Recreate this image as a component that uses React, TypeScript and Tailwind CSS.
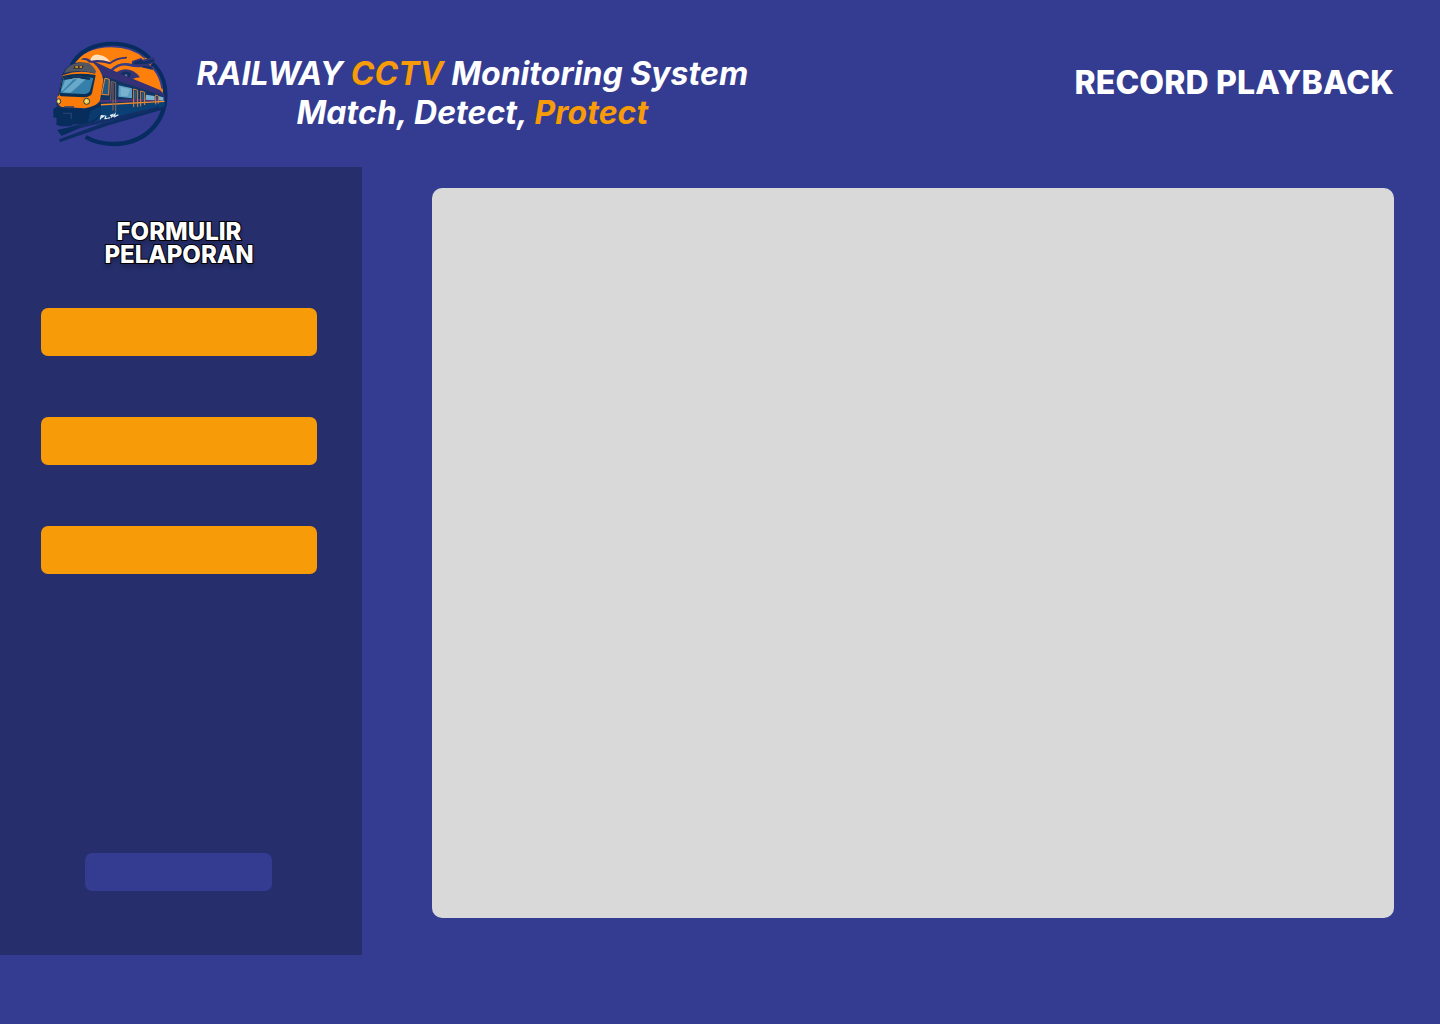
function TrainLogo() {
  return (
    <svg viewBox="0 0 384 348" className="h-[116px] w-[128px] shrink-0" role="img" aria-label="Railway CCTV logo">
      {/* sun */}
      <path d="M74 92 C98 54 142 30 196 28 C258 28 312 58 340 112 Q352 138 352 172 L200 120 L110 84 Z" fill="#fd7f0c" />
      <path d="M72 92 C100 50 144 31 196 31 C244 31 276 46 298 66" fill="none" stroke="#343d91" strokeWidth="6" />
      {/* ring */}
      <path d="M76 88 C100 46 144 23 200 23 C246 23 284 39 311 67" fill="none" stroke="#062c60" strokeWidth="12" />
      <path d="M318 82 C344 106 358 140 358 178 C358 260 294 324 204 324 C172 324 144 318 119 303" fill="none" stroke="#062c60" strokeWidth="13" />
      <path d="M323 98 Q344 123 349 158" fill="none" stroke="#343d91" strokeWidth="6" />
      {/* clouds and birds */}
      <path d="M132 76 Q136 54 157 56 Q178 58 193 77 Q160 70 132 76Z" fill="#ffdfbd" />
      <path d="M104 70 Q120 60 136 74 Q164 69 192 79 Q210 63 243 62 Q244 68 236 68 Q210 70 192 85 Q162 75 136 81 Q120 70 104 70Z" fill="#343579" />
      <path d="M196 104 Q218 80 249 86 Q271 92 290 88" fill="none" stroke="#343d86" strokeWidth="8" />
      <path d="M204 115 Q218 101 238 100 Q264 100 282 124 Q258 126 249 137 Q229 132 204 115Z" fill="#343579" />
      <path d="M223 113 Q240 101 255 112 L250 130 L231 128Z" fill="#102f63" />
      <circle cx="240" cy="119" r="4" fill="#7274a4" />
      {/* camera */}
      <path d="M258 75 L286 66 L290 71 L324 63 L328 79 L308 86 L326 92 L320 102 L284 93 L257 87Z" fill="#343579" />
      <path d="M264 78 L284 72 L293 77 L323 68 L324 77 L300 84 L263 84Z M291 89 L320 94 L316 98 L290 94Z" fill="#102e63" />
      {/* carriages */}
      <path d="M125 76 L148 78 L220 112 L342 162 L356 176 L356 211 L136 263 L138 91Z" fill="#343176" />
      <path d="M161 116 L198 128 L350 179 L354 205 L145 244Z" fill="#123462" />
      <path d="M154 209 L356 197 L356 211 L139 258Z" fill="#0b4075" />
      <path d="M153 196 L355 190" stroke="#4a347e" strokeWidth="7" />
      <path d="M151 207 L355 196" stroke="#f58d2b" strokeWidth="4" />
      <path d="M177 126 L190 130 L188 177 L167 175Z" fill="#22577f" stroke="#e88732" strokeWidth="3" />
      <path d="M194 192 L196 136 L209 140 L209 227 M201 140 L201 223" fill="none" stroke="#8a6459" strokeWidth="3" />
      <path d="M218 148 L258 157 L258 187 L217 182Z" fill="#5d9fc5" />
      <path d="M224 153 L253 160 L244 181 L224 179Z" fill="#79b2d0" />
      <path d="M263 213 L263 159 L275 163 L275 213 M284 211 L284 165 L296 169 L296 207" fill="none" stroke="#e0813c" strokeWidth="3" />
      <path d="M265 164 L272 166 L272 190 L265 189Z M287 169 L293 172 L293 191 L287 190Z" fill="#235d85" />
      <path d="M300 176 L326 180 L326 193 L299 191Z M339 181 L352 184 L352 194 L339 193Z" fill="#78b4d1" />
      <path d="M329 205 L329 177 L337 180 L337 203" fill="none" stroke="#d5813f" strokeWidth="3" />
      {/* nose */}
      <path d="M50 112 Q62 84 98 79 L140 82 Q162 100 170 134 L157 210 Q144 233 112 240 L41 232 L31 207 L37 174Z" fill="#1c315f" />
      <path d="M124 79 L142 81 Q166 100 172 132 L162 193 Q153 212 116 217 L48 213 Q33 211 33 184 L39 178 L50 118 Q98 100 148 113Z" fill="#fb7b0a" />
      <path d="M54 111 Q68 82 100 81 L127 81 Q142 88 151 108 L145 112 Q99 99 54 111Z" fill="#535763" />
      <path d="M50 120 Q94 108 149 117 L138 172 Q134 183 114 184 L46 181 Q39 180 40 168Z" fill="#0b3058" />
      <path d="M52 126 Q92 117 142 126 L132 164 Q129 173 114 174 L43 171Z" fill="#3580ab" />
      <path d="M58 131 L86 127 L50 164 L45 165Z M96 127 L123 127 L74 170 L50 169Z" fill="#68a8c8" />
      <path d="M54 125 Q92 116 133 125 L131 132 Q92 123 52 132Z" fill="#102f57" />
      <path d="M80 128 L104 128" stroke="#b8d5d9" strokeWidth="2" />
      <path d="M86 89 L113 89 L109 98 L82 98Z" fill="#332e29" />
      <path d="M88 93 H96 M101 93 H108" stroke="#f0a92d" strokeWidth="5" />
      <g fill="#f8cf51" stroke="#243851" strokeWidth="3">
        <ellipse cx="38" cy="196" rx="6" ry="8" />
        <ellipse cx="122" cy="196" rx="9" ry="9" />
      </g>
      <path d="M37 193 V198 M121 192 V198" stroke="#fff0a0" strokeWidth="3" />
      {/* coupling and undercarriage */}
      <path d="M29 212 L47 216 L116 219 Q147 214 165 199 L163 237 Q150 262 119 264 L83 265 L74 271 L44 271 L31 266 L32 246 L22 244 L22 218 L29 216Z" fill="#062d5b" />
      <path d="M51 232 H76 V249 M55 213 L84 213" fill="none" stroke="#24406f" strokeWidth="4" />
      <path d="M134 224 L163 212 L163 233 Q149 254 125 258Z" fill="#0b3b6e" />
      {/* rails */}
      <path d="M34 282 L72 274 L88 266 L160 254 L340 211 L340 217 L190 256 L104 276 L47 299Z" fill="#123067" />
      <path d="M34 282 L72 274 L110 270 L47 299Z" fill="#062d5b" />
      <path d="M39 310 L170 262 L356 211 L356 219 L188 268 L42 319Z" fill="#0d2e63" />
      {/* side lettering scribble */}
      <path d="M163 250 L166 239 L174 240 L166 245 M180 239 L177 248 L185 247 M190 243 L188 249 M192 239 L200 236 L195 245 M200 243 L207 234 L206 242 L217 236" fill="none" stroke="#e7eff4" strokeWidth="3.5" />
    </svg>
  );
}

export default function App() {
  return (
    <div className="flex h-[1024px] w-[1440px] flex-col overflow-hidden bg-[#333c91] font-['Inter',sans-serif] text-white">
      <header className="flex h-[167px] shrink-0 items-start pr-[46px] pl-[46px]">
        <div className="pt-9">
          <TrainLogo />
        </div>
        <h1 className="mt-[54px] ml-[22.5px] text-center text-[32px] leading-[39px] font-bold tracking-[0.03px] whitespace-nowrap italic">
          RAILWAY <span className="text-[#f89b09]">CCTV</span> Monitoring System
          <br />
          Match, Detect, <span className="text-[#f89b09]">Protect</span>
        </h1>
        <h2 className="mt-[63px] ml-auto text-[32px] leading-[39px] font-extrabold tracking-[0.14px] whitespace-nowrap">
          RECORD PLAYBACK
        </h2>
      </header>
      <div className="flex items-start">
        <aside className="flex h-[788px] w-[362px] shrink-0 flex-col bg-[#262e6c] pl-[41px]">
          <h3 className="mt-[53px] w-[276px] text-center text-2xl leading-[23px] font-extrabold [-webkit-text-stroke:2px_black] [paint-order:stroke_fill] [text-shadow:0_4px_4px_rgba(0,0,0,0.25)]">
            FORMULIR
            <br />
            PELAPORAN
          </h3>
          <div className="mt-[42px] flex flex-col gap-[61px]">
            <div className="h-12 w-[276px] rounded-[7px] bg-[#f89b09]" />
            <div className="h-12 w-[276px] rounded-[7px] bg-[#f89b09]" />
            <div className="h-12 w-[276px] rounded-[7px] bg-[#f89b09]" />
          </div>
          <div className="mt-auto mb-16 ml-11 h-[38px] w-[187px] rounded-[7px] bg-[#333c91]" />
        </aside>
        <main className="mt-[21px] ml-[70px] h-[730px] w-[962px] rounded-[10px] bg-[#d9d9d9]" />
      </div>
    </div>
  );
}
